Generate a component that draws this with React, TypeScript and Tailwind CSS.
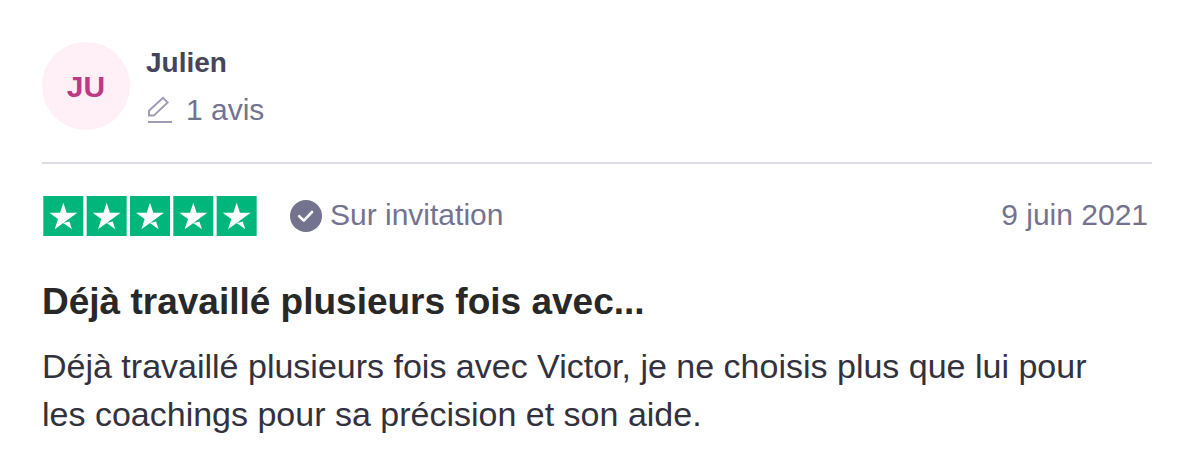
const stars = [0, 104, 208, 312, 416];

function StarRating() {
  return (
    <svg
      role="img"
      aria-label="Noté 5 sur 5 étoiles"
      viewBox="0 0 512 96"
      className="h-10 w-[216px]"
    >
      {stars.map((x) => (
        <g key={x} transform={`translate(${x} 0)`}>
          <path fill="#00b67a" d="M0 0h96v96H0z" />
          <path
            fill="#fff"
            d="M48 64.7L62.6 61l6.1 18.8zm33.6-24.3H55.9L48 16.2l-7.9 24.2H14.4l20.8 15-7.9 24.2 20.8-15 12.8-9.2z"
          />
        </g>
      ))}
    </svg>
  );
}

function PencilIcon() {
  return (
    <svg
      aria-hidden="true"
      viewBox="0 0 28 28"
      fill="none"
      stroke="#9e9db5"
      strokeWidth="2"
      className="size-7"
    >
      <path d="M3 19.6v-4.8L17 1.8l4.6 4.6L7.8 19.6z" />
      <path d="M2 26h24" />
    </svg>
  );
}

function CheckIcon() {
  return (
    <svg aria-hidden="true" viewBox="0 0 32 32" fill="none" className="size-8">
      <circle cx="16" cy="16" r="16" fill="#73738f" />
      <path
        d="M9.2 16.2l4.6 4.4 8.2-8.6"
        stroke="#fff"
        strokeWidth="2.6"
        strokeLinecap="round"
        strokeLinejoin="round"
      />
    </svg>
  );
}

export default function App() {
  return (
    <main className="bg-white px-[42px] pt-[42px] pr-11 font-['Liberation_Sans',Arial,sans-serif]">
      <article>
        {/* Author */}
        <header className="flex gap-4 border-b-2 border-[#dcdce6] pb-8">
          <div className="flex size-22 items-center justify-center rounded-full bg-[#ffeff6] text-[30px] font-bold text-[#bc3a81]">
            JU
          </div>
          <div className="flex flex-col justify-between">
            <div className="text-[28px] leading-[42px] font-bold text-[#45455a]">
              Julien
            </div>
            <div className="flex items-center gap-3 text-[30px] leading-10 text-[#73738f]">
              <PencilIcon />
              <span>1 avis</span>
            </div>
          </div>
        </header>

        {/* Rating */}
        <div className="flex items-start justify-between pt-8 text-[30px] leading-[38px] text-[#73738f]">
          <div className="flex items-start gap-8">
            <StarRating />
            <div className="flex gap-2">
              <div className="pt-1">
                <CheckIcon />
              </div>
              <span>Sur invitation</span>
            </div>
          </div>
          <time dateTime="2021-06-09" className="pr-1">
            9 juin 2021
          </time>
        </div>

        {/* Review */}
        <h2 className="pt-[42px] text-[37px] leading-[48px] font-bold text-[#282828]">
          Déjà travaillé plusieurs fois avec...
        </h2>
        <p className="pt-4 pr-8 text-[34px] leading-[48px] text-[#32323e]">
          Déjà travaillé plusieurs fois avec Victor, je ne choisis plus que lui
          pour les coachings pour sa précision et son aide.
        </p>
      </article>
    </main>
  );
}
